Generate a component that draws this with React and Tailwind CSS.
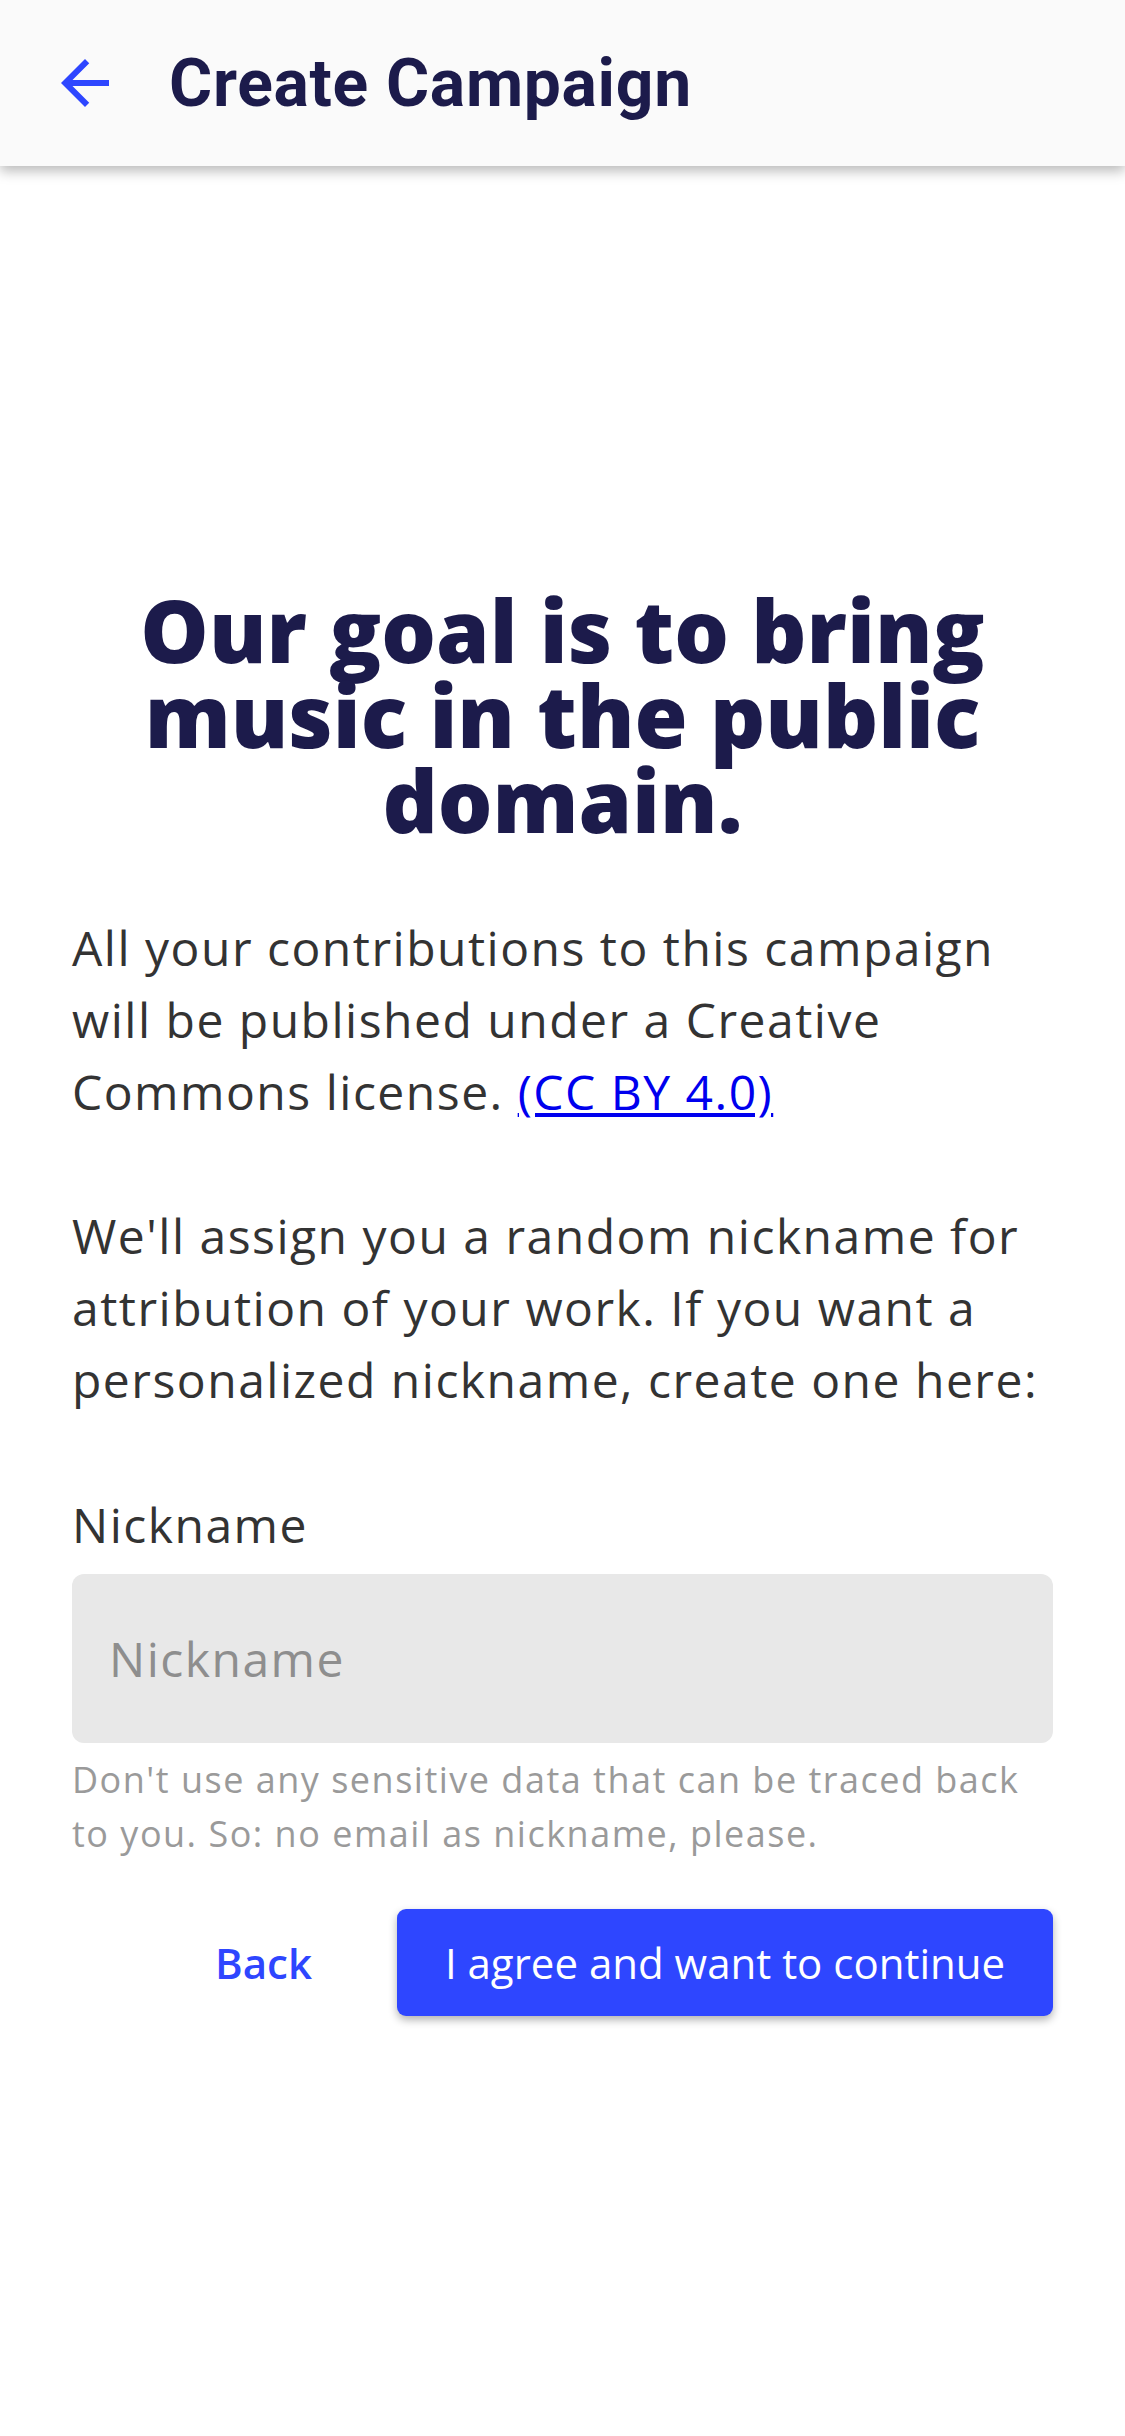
import React, { useState } from "react";

const ArrowBack = () => (
  <svg width="72" height="72" viewBox="0 0 24 24" fill="#2e46ff">
    <path d="M20 11H7.83l5.59-5.59L12 4l-8 8 8 8 1.41-1.41L7.83 13H20v-2z" />
  </svg>
);

const App = () => {
  const [nickname, setNickname] = useState("");

  return (
    <div className="min-h-screen flex flex-col bg-white" style={{ fontFamily: "'Open Sans', sans-serif" }}>
      {/* Top app bar */}
      <header className="relative z-10 h-[166px] shrink-0 bg-[#fafafa] shadow-[0_5px_12px_rgba(0,0,0,0.28)] flex items-center pl-[49px]">
        <button className="flex items-center">
          <ArrowBack />
        </button>
        <h1 className="ml-[48px] text-[66px] font-bold text-[#1c1b4b] font-['Roboto',sans-serif] tracking-[0.7px]">
          Create Campaign
        </h1>
      </header>

      {/* Consent content, centered in the rest of the screen */}
      <main className="flex-1 flex flex-col justify-center px-[72px]">
        <h2 className="text-center text-[86px] leading-[85px] font-extrabold text-[#1c1b4b]">
          Our goal is to bring music in the public domain.
        </h2>

        <p className="mt-[70px] text-[48px] leading-[72px] tracking-[1.5px] text-[#333333]">
          All your contributions to this campaign will be published under a Creative Commons license.{" "}
          <a href="#" className="text-[#0000ee] underline">(CC BY 4.0)</a>
        </p>
        <p className="mt-[72px] text-[48px] leading-[72px] tracking-[1.5px] text-[#333333]">
          We'll assign you a random nickname for attribution of your work. If you want a personalized nickname, create one here:
        </p>

        <label className="mt-[73px] block text-[48px] leading-[72px] tracking-[1.5px] text-[#333333]">Nickname</label>
        <input
          className="mt-[13px] h-[169px] w-full rounded-[12px] bg-[#e8e8e8] px-[37px] text-[48px] tracking-[1.5px] text-[#333333] placeholder-[#8e8e8e] outline-none"
          placeholder="Nickname"
          value={nickname}
          onChange={(e) => setNickname(e.target.value)}
        />
        <p className="mt-[10px] text-[36px] leading-[54px] tracking-[1.5px] text-[#9a9a9a]">
          Don't use any sensitive data that can be traced back to you. So: no email as nickname, please.
        </p>

        <div className="mt-[48px] flex items-center justify-end">
          <button className="px-[44px] h-[107px] text-[42px] font-semibold text-[#2e46ff]">Back</button>
          <button className="ml-[41px] h-[107px] w-[656px] rounded-[9px] bg-[#2e46ff] text-[42px] text-white shadow-[0_4px_8px_rgba(0,0,0,0.3)]">
            I agree and want to continue
          </button>
        </div>
      </main>
    </div>
  );
};

export default App;
